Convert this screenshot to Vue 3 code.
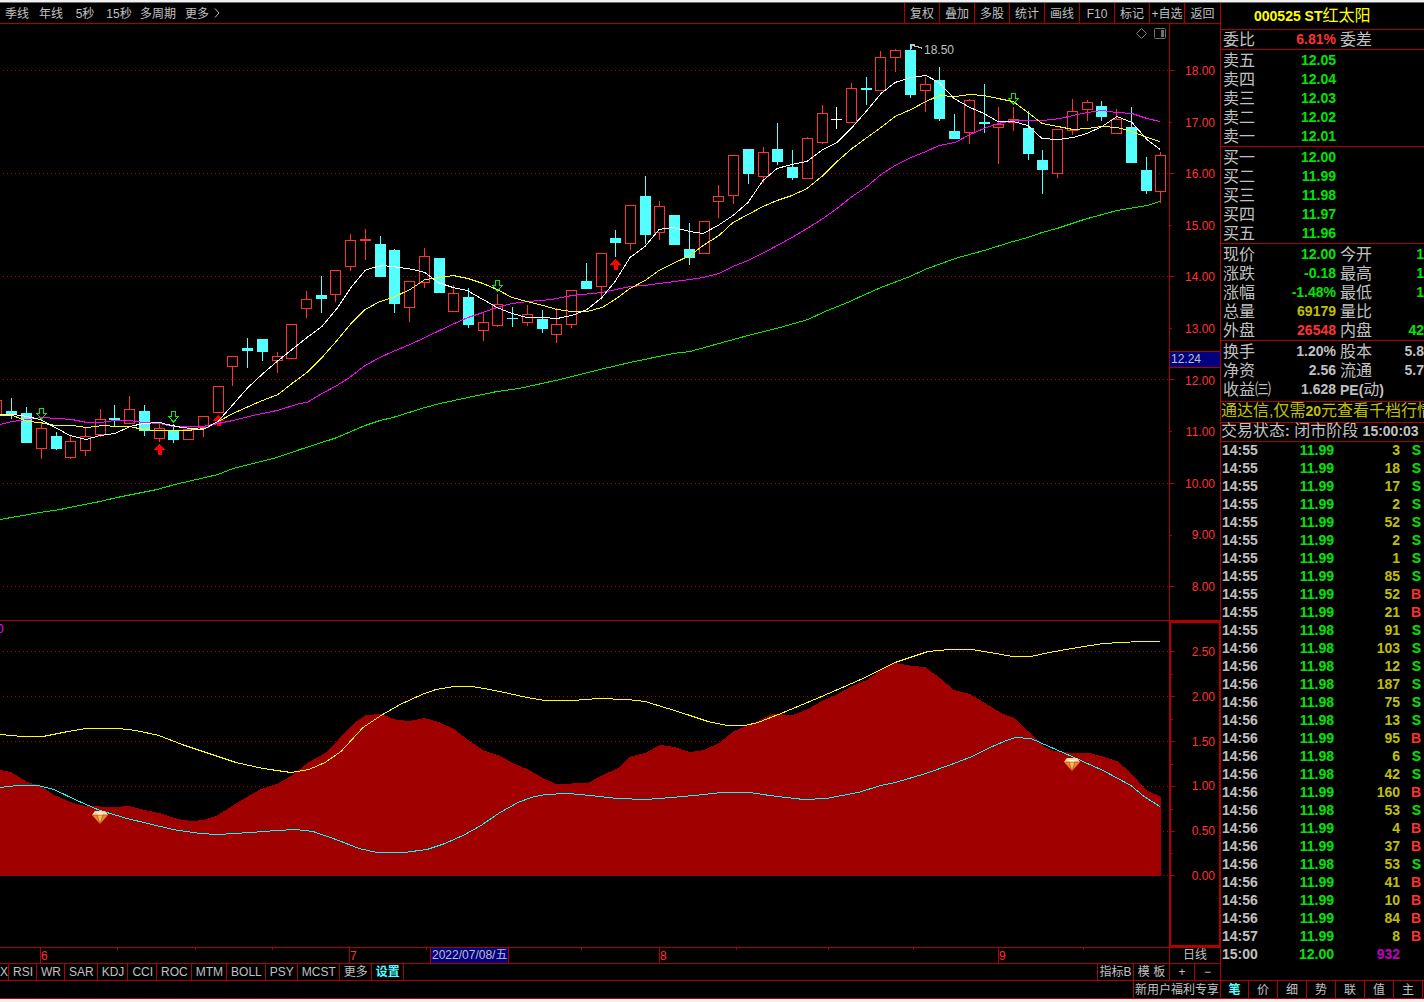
<script setup>
const periods = ['季线', '年线', '5秒', '15秒', '多周期', '更多']
const tools = ['复权', '叠加', '多股', '统计', '画线', 'F10', '标记', '+自选', '返回']
const indicators = ['X', 'RSI', 'WR', 'SAR', 'KDJ', 'CCI', 'ROC', 'MTM', 'BOLL', 'PSY', 'MCST', '更多', '设置']
const sideTabs = ['笔', '价', '细', '势', '联', '值', '主']

const prices = ['18.00', '17.00', '16.00', '15.00', '14.00', '13.00', '12.00', '11.00', '10.00', '9.00', '8.00']
const levels = ['2.50', '2.00', '1.50', '1.00', '0.50', '0.00']
const majorY = [70, 173, 276, 379, 483, 586]
const minorY = [122, 225, 328, 431, 535]
const levelY = [651, 696, 741, 786, 831, 875]
const halfY = [674, 719, 764, 809, 853]

const asks = [['卖五', '12.05'], ['卖四', '12.04'], ['卖三', '12.03'], ['卖二', '12.02'], ['卖一', '12.01']]
const bids = [['买一', '12.00'], ['买二', '11.99'], ['买三', '11.98'], ['买四', '11.97'], ['买五', '11.96']]
const stats = [
  ['现价', '12.00', 'g', '今开', '1', 'g'],
  ['涨跌', '-0.18', 'g', '最高', '1', 'g'],
  ['涨幅', '-1.48%', 'g', '最低', '1', 'g'],
  ['总量', '69179', 'y', '量比', '', 'g'],
  ['外盘', '26548', 'r', '内盘', '42', 'g'],
]
const basics = [
  ['换手', '1.20%', 'w', '股本', '5.8', 'w'],
  ['净资', '2.56', 'w', '流通', '5.7', 'w'],
]

const ticks = `14:55 11.99 3 S|14:55 11.99 18 S|14:55 11.99 17 S|14:55 11.99 2 S|14:55 11.99 52 S|14:55 11.99 2 S|14:55 11.99 1 S
14:55 11.99 85 S|14:55 11.99 52 B|14:55 11.99 21 B|14:55 11.98 91 S|14:56 11.98 103 S|14:56 11.98 12 S|14:56 11.98 187 S
14:56 11.98 75 S|14:56 11.98 13 S|14:56 11.99 95 B|14:56 11.98 6 S|14:56 11.98 42 S|14:56 11.99 160 B|14:56 11.98 53 S
14:56 11.99 4 B|14:56 11.99 37 B|14:56 11.98 53 S|14:56 11.99 41 B|14:56 11.99 10 B|14:56 11.99 84 B|14:57 11.99 8 B
15:00 12.00 932`.split(/[|\n]/).map((t) => t.trim().split(' '))

// x, high, body top, body bottom, low, kind (r = up, c = down, w = flat)
const candles = `-4 400 400 416 416 r,11 398 411 414 419 c,26 407 413 443 443 c,41 422 428 449 459 r,56 432 436 449 450 c,70 436 441 458 459 r,
85 427 436 451 456 r,100 409 419 435 437 r,114 405 418 420 426 c,129 396 409 424 424 r,144 405 411 431 436 c,159 423 428 439 442 r,
173 424 431 440 443 c,188 427 429 440 440 r,203 416 416 428 437 r,218 386 386 413 413 r,232 356 356 367 386 r,247 338 348 351 368 c,
262 339 339 352 361 c,277 352 356 361 373 r,291 324 324 359 359 r,306 291 299 309 318 r,321 276 295 299 313 c,335 270 270 295 302 r,
350 234 240 267 271 r,365 229 239 241 260 r,380 236 244 277 277 c,394 249 250 304 313 c,409 281 281 308 322 r,424 248 256 283 288 r,
439 258 258 293 293 c,453 285 293 312 312 r,468 288 297 325 328 c,483 313 322 331 341 r,497 294 304 326 327 r,512 307 318 319 327 c,
527 305 314 323 326 r,542 310 319 329 333 c,556 308 324 335 343 r,571 290 290 325 328 r,586 263 281 289 289 c,601 253 253 287 300 r,
615 230 238 243 257 c,630 205 205 244 250 r,645 176 196 235 244 c,659 201 206 233 240 r,674 215 215 245 245 c,689 223 249 258 265 c,
704 221 221 254 254 r,718 185 196 202 218 r,733 155 155 196 204 r,748 149 149 174 184 c,763 147 152 177 183 r,777 123 149 162 165 c,
792 150 167 178 180 c,807 137 138 179 179 r,822 105 113 143 144 r,836 107 119 120 129 w,851 83 88 123 123 r,866 77 88 90 105 c,
880 51 57 91 91 r,895 49 50 58 72 r,910 44 50 95 98 c,925 77 84 91 112 r,939 67 80 119 121 c,954 114 131 139 139 c,969 99 100 133 144 r,
984 84 122 124 133 c,998 107 124 128 164 r,1013 107 119 123 131 r,1028 111 128 154 160 c,1042 150 160 170 194 c,1057 129 129 174 178 r,
1072 99 111 131 135 r,1087 100 102 110 121 r,1101 101 106 117 121 c,1116 109 119 134 134 r,1131 107 127 163 163 c,1146 157 170 191 194 c,
1160 152 155 192 203 r`.split(',').map((row) => {
  const [x, high, top, bottom, low, kind] = row.trim().split(' ')
  return { x: +x, high: +high, top: +top, bottom: +bottom, low: +low, kind }
})

const ma5 = '0,414 13,414 27,416 40,419 57,428 70,435 86,439 100,435 115,433 130,426 143,423 160,422 167,424 182,427 203,429 218,421 233,404 248,387 263,373 277,361 292,349 307,337 322,326 337,308 351,287 365,270 373,267 383,265 400,267 413,269 425,272 438,282 453,287 467,290 483,299 497,307 512,313 527,317 543,317 557,318 572,315 587,309 602,297 615,281 630,257 645,246 659,229 673,227 690,231 703,233 718,225 733,215 748,202 763,180 777,168 792,164 807,161 823,149 837,142 852,127 867,110 881,93 895,82 911,77 926,75 939,82 954,98 970,107 984,113 998,121 1013,121 1028,125 1042,138 1058,139 1073,137 1087,133 1102,126 1117,116 1132,122 1147,139 1160,149'
const ma10 = '0,415 13,415 27,421 40,422 55,425 72,425 87,427 103,425 117,426 130,426 143,429 157,430 187,430 205,428 218,421 233,413 260,401 278,394 292,383 307,372 322,357 337,340 351,323 365,309 380,301 393,297 410,289 425,279 440,277 453,275 468,278 483,283 497,289 512,297 527,301 543,305 557,309 572,311 587,311 602,307 615,299 630,288 645,280 659,270 673,263 690,255 703,245 719,235 733,222 748,214 763,206 777,200 792,195 807,188 823,175 837,161 852,148 867,137 881,127 895,116 911,109 926,101 939,95 955,96 970,94 984,95 998,98 1013,101 1028,112 1042,123 1058,126 1073,129 1087,128 1102,126 1117,127 1132,131 1147,137 1160,141'
const ma20 = '0,424 12,421 27,419 42,417 57,418 72,419 87,422 100,422 115,420 130,420 143,422 160,423 173,426 203,426 218,423 233,420 253,415 277,410 300,403 307,402 322,393 337,385 351,376 365,365 380,357 393,351 410,344 425,337 450,325 468,317 483,312 497,307 512,303 528,301 552,299 572,295 602,292 630,286 645,285 659,283 690,279 703,277 719,273 733,266 748,260 768,250 792,237 807,228 823,218 837,208 852,196 867,186 881,174 895,165 911,157 926,151 939,145 955,142 970,134 984,128 998,123 1013,120 1043,120 1060,118 1073,115 1087,112 1102,110 1117,112 1132,113 1147,118 1160,121'
const ma60 = '0,519 40,512 60,509 100,501 117,497 157,489 175,484 218,474 233,468 277,457 300,449 328,440 337,437 365,425 380,420 393,417 425,407 440,403 468,397 497,391 519,388 560,379 600,369 630,362 673,353 690,351 719,343 748,335 780,327 808,319 825,311 850,301 865,294 881,287 910,276 925,269 955,258 984,250 1013,241 1028,237 1042,232 1057,228 1084,219 1117,210 1147,205 1160,201'

const area = '0,876 0,770 11,772 27,782 41,786 54,795 73,803 86,806 114,807 129,806 145,810 163,814 177,819 191,821 204,820 218,815 232,806 245,798 261,789 277,784 291,776 309,762 325,753 338,740 354,723 366,715 381,714 397,720 410,721 424,718 439,722 454,729 468,740 483,750 500,756 513,763 529,770 543,778 556,784 588,783 599,777 618,768 629,757 645,753 660,745 674,747 690,752 704,750 719,743 734,731 754,723 772,714 793,715 808,709 822,701 836,695 852,686 867,680 881,670 895,663 913,666 925,667 940,678 954,690 970,694 985,703 1001,713 1014,718 1028,731 1043,746 1054,751 1072,753 1090,753 1101,756 1117,761 1131,773 1146,790 1161,797 1161,876'
const upper = '0,734 23,736 43,736 68,731 86,728 118,728 136,730 159,735 182,744 209,753 236,762 263,768 291,772 309,769 325,762 341,751 363,727 381,715 400,704 422,694 436,689 454,686 472,686 490,689 509,693 527,697 545,700 572,700 599,698 627,699 645,701 668,708 690,715 708,721 727,725 745,725 758,722 781,713 817,698 863,678 895,662 913,656 928,651 949,649 972,649 990,652 1013,656 1031,656 1049,652 1072,648 1103,643 1140,641 1160,641'
const lower = '0,787 18,785 38,785 54,789 77,800 100,810 127,818 173,829 200,833 218,834 250,832 277,830 295,829 313,831 336,839 359,848 377,852 404,852 427,849 445,843 463,835 481,825 500,812 518,802 531,797 545,794 568,793 590,795 618,798 645,799 672,797 704,794 722,792 749,792 777,796 804,799 826,798 858,792 881,785 895,782 926,773 954,763 972,756 990,747 1004,741 1015,737 1031,738 1049,746 1072,756 1103,770 1131,785 1144,796 1160,806'

const sells = [[41, 408], [173, 411], [497, 280], [1013, 93]]
const buys = [[159, 444], [218, 415], [615, 259]]
const gems = [[100, 817], [1072, 764]]
const months = [[40, '6'], [349, '7'], [659, '8'], [998, '9']]
const weeks = [117, 195, 272, 426, 504, 581, 736, 828, 913, 1083]
</script>

<template>
  <div class="terminal">
    <div class="edge top"></div>
    <div class="body">
      <main class="left">
        <header class="toolbar">
          <nav class="periods">
            <button v-for="p in periods" :key="p">{{ p }}</button>
            <svg width="6" height="10" viewBox="0 0 6 10"><path d="M1 .5 5 5 1 9.500" fill="none" stroke="#c0c0c0" /></svg>
          </nav>
          <nav class="tools">
            <button v-for="t in tools" :key="t">{{ t }}</button>
          </nav>
        </header>

        <section class="pane price">
          <div class="plot">
            <svg width="1176" height="596" viewBox="0 24 1176 596" shape-rendering="crispEdges">
              <g class="grid">
                <line v-for="y in majorY" :key="y" x1="3" x2="1169" :y1="y + .5" :y2="y + .5" stroke-dasharray="1 3" />
              </g>
              <g class="axis">
                <line x1="1169.500" x2="1169.500" y1="24" y2="620" />
                <line v-for="y in majorY" :key="y" x1="1169" x2="1175" :y1="y + .5" :y2="y + .5" />
                <line v-for="y in minorY" :key="y" x1="1169" x2="1172" :y1="y + .5" :y2="y + .5" />
              </g>
              <g v-for="c in candles" :key="c.x" :class="['candle', c.kind]">
                <line :x1="c.x + .5" :x2="c.x + .5" :y1="c.high" :y2="c.top" />
                <line :x1="c.x + .5" :x2="c.x + .5" :y1="c.bottom" :y2="c.low" />
                <rect v-if="c.kind === 'r'" :x="c.x - 4.5" :y="c.top + .5" width="10" :height="c.bottom - c.top - 1" />
                <rect v-else :x="c.x - 5" :y="c.top" width="11" :height="c.bottom - c.top" />
              </g>
              <path v-for="b in buys" :key="b[0]" :transform="`translate(${b[0]} ${b[1]})`" d="M0 0h1v1h1v1h1v1h1v1h1v1h1v1h-3v5h-4v-5h-4v-1h1v-1h1v-1h1v-1h1v-1h1z" fill="#f00" />
              <path v-for="s in sells" :key="s[0]" :transform="`translate(${s[0]} ${s[1]})`" d="M-1.500 .5h4v5h3l-5 5.500-5-5.500h3z" fill="none" stroke="#00f000" />
              <g class="lines" transform="translate(0 .5)">
                <polyline :points="ma60" stroke="#00f000" />
                <polyline :points="ma20" stroke="#f0f" />
                <polyline :points="ma10" stroke="#ff0" />
                <polyline :points="ma5" stroke="#fff" />
              </g>
              <path d="M911.500 49v-5h3M911 45.500h3l1 1h3l1 1h2l1 1" fill="none" stroke="#c0c0c0" />
              <text x="924" y="54" class="peak">18.50</text>
              <path d="M1141.500 28.500l5 5-5 5-5-5z" fill="none" stroke="#808080" shape-rendering="auto" />
              <g shape-rendering="auto"><rect x="1154.500" y="28.500" width="11" height="10" rx="1" fill="none" stroke="#707070" /><rect x="1161" y="30" width="3" height="7" fill="#707070" /></g>
            </svg>
          </div>
          <ol class="scale">
            <li v-for="p in prices" :key="p">{{ p }}</li>
          </ol>
          <output class="cursor-price">12.24</output>
        </section>

        <section class="pane osc">
          <div class="plot">
            <svg width="1176" height="326" viewBox="0 621 1176 326" shape-rendering="crispEdges">
              <g class="grid">
                <line v-for="y in levelY" :key="y" x1="3" x2="1169" :y1="y + .5" :y2="y + .5" stroke-dasharray="1 3" />
              </g>
              <polygon :points="area" fill="#a00000" />
              <g class="lines" transform="translate(0 .5)">
                <polyline :points="upper" stroke="#ff0" />
                <polyline :points="lower" stroke="#0ff" />
              </g>
              <g v-for="g in gems" :key="g[0]" :transform="`translate(${g[0]} ${g[1]})`" shape-rendering="auto">
                <path d="M-5-6h10l3 4-8 9-8-9z" fill="#e88a2a" />
                <path d="M-5-6h10l3 4h-16z" fill="#ffd9a0" />
                <path d="M-3-2h6l-3 8z" fill="#ffb860" />
                <path d="M-2-4h4l1 2h-6z" fill="#fff" />
                <path d="M-8-2h16M-3-2 0 7 3-2" fill="none" stroke="#a04810" stroke-opacity=".6" />
              </g>
              <g class="axis">
                <rect x="1169" y="621" width="2" height="326" fill="#b00000" stroke="none" />
                <rect x="1171" y="621" width="5" height="2" fill="#b00000" stroke="none" />
                <rect x="1171" y="945" width="5" height="2" fill="#b00000" stroke="none" />
                <line v-for="y in levelY" :key="y" x1="1171" x2="1175" :y1="y + .5" :y2="y + .5" />
                <line v-for="y in halfY" :key="y" x1="1171" x2="1173" :y1="y + .5" :y2="y + .5" />
              </g>
              <text x="-3" y="633" class="clip">0</text>
            </svg>
          </div>
          <ol class="scale">
            <li v-for="l in levels" :key="l">{{ l }}</li>
          </ol>
        </section>

        <section class="timeline">
          <div class="plot">
            <svg width="1169" height="15" viewBox="0 948 1169 15" shape-rendering="crispEdges">
              <g class="axis">
                <line v-for="m in months" :key="m[0]" :x1="m[0] + .5" :x2="m[0] + .5" y1="948" y2="963" />
                <line v-for="w in weeks" :key="w" :x1="w + .5" :x2="w + .5" y1="948" y2="950" />
              </g>
              <text v-for="m in months" :key="m[0]" :x="m[0] + 1" y="960" class="month">{{ m[1] }}</text>
              <rect x="430" y="948" width="79" height="15" fill="#000080" />
              <path d="M430.500 948v15M508.500 948v15" stroke="#b00000" />
              <text x="432" y="959" class="day">2022/07/08/五</text>
            </svg>
          </div>
          <button class="cycle">日线</button>
        </section>

        <nav class="indicators">
          <button v-for="i in indicators" :key="i" :class="{ active: i === '设置' }">{{ i }}</button>
          <span class="spacer"></span>
          <button class="wide">指标B</button>
          <button class="wide">模 板</button>
          <button class="zoom">+</button>
          <button class="zoom">−</button>
        </nav>
        <footer class="promo-row"><a href="#">新用户福利专享</a></footer>
      </main>

      <aside class="side">
        <h1><b>000525 ST</b>红太阳</h1>
        <table class="quote ratio">
          <tbody>
            <tr><th>委比</th><td class="r">6.81%</td><th class="second">委差</th><td></td></tr>
          </tbody>
        </table>
        <table class="quote book">
          <tbody>
            <tr v-for="a in asks" :key="a[0]"><th>{{ a[0] }}</th><td class="g">{{ a[1] }}</td><th class="second"></th><td></td></tr>
          </tbody>
        </table>
        <table class="quote book">
          <tbody>
            <tr v-for="b in bids" :key="b[0]"><th>{{ b[0] }}</th><td class="g">{{ b[1] }}</td><th class="second"></th><td></td></tr>
          </tbody>
        </table>
        <table class="quote book">
          <tbody>
            <tr v-for="s in stats" :key="s[0]"><th>{{ s[0] }}</th><td :class="s[2]">{{ s[1] }}</td><th class="second">{{ s[3] }}</th><td :class="s[5]">{{ s[4] }}</td></tr>
          </tbody>
        </table>
        <table class="quote basic">
          <tbody>
            <tr v-for="s in basics" :key="s[0]"><th>{{ s[0] }}</th><td :class="s[2]">{{ s[1] }}</td><th class="second">{{ s[3] }}</th><td :class="s[5]">{{ s[4] }}</td></tr>
            <tr><th>收益㈢</th><td class="w">1.628</td><th class="second"><b>PE(</b>动<b>)</b></th><td></td></tr>
          </tbody>
        </table>
        <p class="notice">通达信,仅需<b>20</b>元查看千档行情</p>
        <p class="status">交易状态<b>:</b> 闭市阶段 <b>15:00:03</b></p>
        <table class="ticks">
          <tbody>
            <tr v-for="(t, i) in ticks" :key="i">
              <td class="time">{{ t[0] }}</td>
              <td class="deal g">{{ t[1] }}</td>
              <td :class="['vol', t[3] ? 'y' : 'p']">{{ t[2] }}</td>
              <td :class="['dir', t[3] === 'B' ? 'r' : 'g']">{{ t[3] }}</td>
            </tr>
          </tbody>
        </table>
        <nav class="side-tabs">
          <button v-for="(s, i) in sideTabs" :key="s" :class="{ active: i === 0 }">{{ s }}</button>
        </nav>
      </aside>
    </div>
    <div class="edge bottom"></div>
  </div>
</template>

<style>
body {
  margin: 0;
  background: #000;
}
</style>

<style scoped>
.terminal {
  background: #000;
  color: #c0c0c0;
  font: 12px/15px "Liberation Sans", "Noto Sans CJK SC", sans-serif;
  overflow: hidden;
}
.edge {
  box-sizing: border-box;
  height: 3px;
  background: #f0f0f0;
}
.top { border-bottom: 1px solid #707070; }
.body {
  display: flex;
  border-bottom: 1px solid #b00000;
}
.left {
  flex: 1;
  min-width: 0;
}
button {
  margin: 0;
  padding: 0;
  border: 0;
  background: none;
  color: inherit;
  font: inherit;
  white-space: nowrap;
  cursor: pointer;
}
.toolbar,
.pane,
.timeline,
.indicators {
  display: flex;
  border-bottom: 1px solid #b00000;
}
.toolbar {
  justify-content: space-between;
  height: 20px;
}
.periods,
.tools { display: flex; }
.periods { align-items: center; }
.periods button {
  min-width: 34px;
  padding: 2px 4px 0;
}
.tools button {
  box-sizing: border-box;
  width: 35px;
  padding-top: 2px;
  border-left: 1px solid #b00000;
}
.tools button:last-child { width: 36px; }

.pane { position: relative; }
.plot {
  display: flex;
  flex: 1;
  min-width: 0;
  justify-content: flex-end;
  overflow: hidden;
}
.plot svg {
  flex: none;
  display: block;
}
.grid line,
.axis line { stroke: #b00000; }
.lines polyline { fill: none; }
.candle.r line, .candle.r rect { stroke: #ff3232; fill: none; }
.candle.c line { stroke: #54ffff; }
.candle.c rect { fill: #54ffff; }
.candle.w line { stroke: #fff; }
.candle.w rect { fill: #fff; }
.peak, .day { fill: #c0c0c0; }
.month { fill: #ff3232; }
.clip { fill: #f0f; }

.scale {
  box-sizing: border-box;
  display: flex;
  flex-direction: column;
  justify-content: space-between;
  width: 44px;
  margin: 0;
  padding: 40px 5px 25px 0;
  list-style: none;
  color: #ff3232;
  text-align: right;
}
.osc .scale {
  padding: 22px 4px 61px 0;
  border: 2px solid #b00000;
  border-left: 0;
  border-right-width: 1px;
}
.cursor-price {
  position: absolute;
  top: 327px;
  right: 0;
  box-sizing: border-box;
  width: 50px;
  height: 17px;
  border: 1px solid #b00000;
  border-width: 1px 0;
  padding-left: 1px;
  background: #000080;
}
.timeline { height: 15px; }
.cycle {
  box-sizing: border-box;
  width: 51px;
  border-left: 1px solid #b00000;
}
.indicators { height: 16px; }
.indicators button {
  box-sizing: border-box;
  padding: 0 3px 0 4px;
  border-right: 1px solid #b00000;
}
.indicators button:first-child { width: 9px; padding: 0; }
.spacer {
  flex: 1;
  border-right: 1px solid #b00000;
}
.indicators .wide { width: 36px; padding: 0; }
.indicators .zoom { width: 25px; padding: 0; }
.indicators .zoom:last-child { border-right: 0; }
.active {
  color: #54ffff;
  font-weight: 700;
}
.promo-row {
  display: flex;
  justify-content: flex-end;
  height: 17px;
}
.promo-row a {
  padding: 0 1px;
  border-left: 1px solid #b00000;
  color: inherit;
  line-height: 18px;
  text-decoration: none;
}

.side {
  box-sizing: border-box;
  display: flex;
  flex-direction: column;
  width: 204px;
  border-left: 1px solid #b00000;
  font-size: 16px;
  overflow: hidden;
}
.side b,
.quote td,
.ticks td {
  font-size: 14px;
  font-weight: 700;
}
.side h1,
.notice,
.status {
  margin: 0;
  border-bottom: 1px solid #b00000;
  font-size: 16px;
  font-weight: 400;
  white-space: nowrap;
}
.side h1 {
  padding-left: 33px;
  color: #ff0;
  line-height: 26px;
  height: 26px;
}
.quote {
  width: 100%;
  padding-left: 2px;
  border-spacing: 0;
  border-bottom: 1px solid #b00000;
  table-layout: fixed;
}
.book { padding-top: 1px; }
.basic { padding: 1px 0 2px 2px; }
.quote th,
.quote td {
  height: 19px;
  padding: 0;
  line-height: 19px;
  white-space: nowrap;
}
.quote th {
  width: 50px;
  font-weight: 400;
  text-align: left;
}
.quote td { text-align: right; }
.quote td:nth-child(2) { width: 63px; }
.quote .second { padding-left: 4px; }
.quote b { line-height: 16px; }
.r { color: #ff3232; }
.g { color: #00e600; }
.y { color: #c0c000; }
.p { color: #c000c0; }
.w { color: #c0c0c0; }
.notice {
  height: 20px;
  color: #c0c000;
  line-height: 18px;
}
.status {
  height: 18px;
  line-height: 16px;
}
.ticks {
  width: 100%;
  border-spacing: 0;
}
.ticks td {
  height: 18px;
  padding: 0;
  line-height: 16px;
  text-align: right;
  vertical-align: top;
}
.ticks .time {
  width: 49px;
  padding-left: 1px;
  text-align: left;
}
.ticks .deal { width: 63px; }
.ticks .vol { width: 66px; }
.ticks .dir { padding-right: 3px; }
.side-tabs {
  display: flex;
  margin-top: auto;
  height: 17px;
  border-top: 1px solid #b00000;
  font-size: 12px;
}
.side-tabs button {
  box-sizing: border-box;
  width: 29px;
  flex: none;
  padding-top: 2px;
  border-right: 1px solid #b00000;
}
.side-tabs button:first-child { width: 28px; }
</style>
